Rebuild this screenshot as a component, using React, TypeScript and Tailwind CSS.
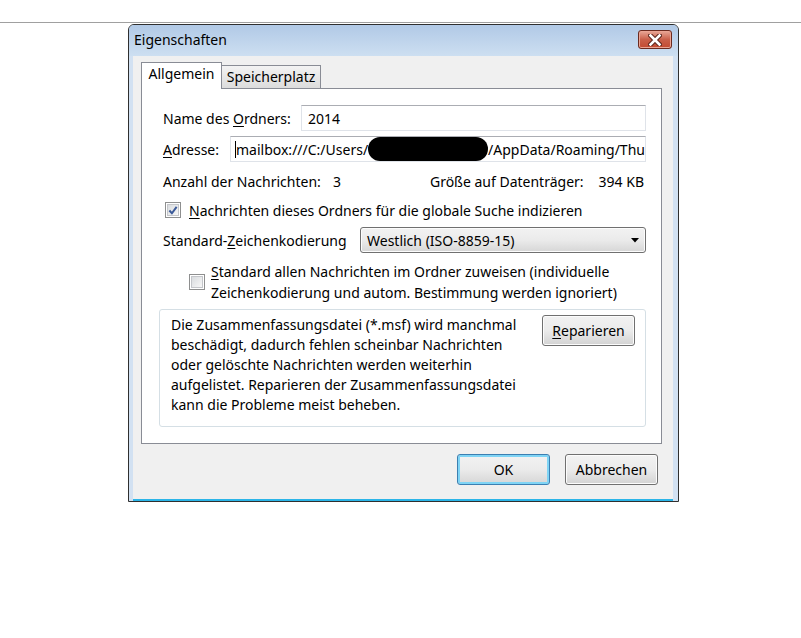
import React from "react";

function Checkbox({ checked = false }: { checked?: boolean }) {
  return (
    <span className="flex h-[16px] w-[16px] shrink-0 items-center justify-center border border-[#8e8f8f] bg-white">
      <span className="flex h-[12px] w-[12px] items-center justify-center border border-[#c4c6ca] bg-linear-to-br from-[#d9dcdf] to-[#f7f7f7]">
        {checked ? (
          <svg width="11" height="11" viewBox="0 0 11 11">
            <path d="M1.5 5.5 L4.3 8.5 L9.5 1.5" fill="none" stroke="#3b5a99" strokeWidth="2.2" />
          </svg>
        ) : null}
      </span>
    </span>
  );
}

function WinButton({ children, isDefault = false }: { children: React.ReactNode; isDefault?: boolean }) {
  return (
    <button
      className={
        isDefault
          ? "flex h-[31px] w-[93px] items-center justify-center rounded-[3px] border border-[#3c7fb1] bg-linear-to-b from-[#f2f2f2] via-[#ebebeb] to-[#d6d6d6] shadow-[inset_0_0_0_2px_#7fd4f5]"
          : "flex h-[31px] w-[93px] items-center justify-center rounded-[3px] border border-[#707070] bg-linear-to-b from-[#f2f2f2] via-[#ebebeb] to-[#d3d3d3] shadow-[inset_0_0_0_1px_#fcfcfc]"
      }
    >
      {children}
    </button>
  );
}

export default function App() {
  return (
    <div className="h-[638px] w-[801px] bg-white font-['Noto_Sans',sans-serif] text-[14px] text-black">
      <div className="h-[23px] border-b border-[#a0a0a0]" />

      {/* dialog window */}
      <div className="mt-[1px] ml-[128px] w-[551px] rounded-t-[6px] border border-[#2f2f2f] bg-[#d2e1f2]">
        <div className="flex h-[31px] items-start justify-between rounded-t-[5px] bg-linear-to-b from-[#b1c9e6] to-[#cddff1] pl-[5px] pr-[6px]">
          <span className="mt-[5px] leading-[20px]">Eigenschaften</span>
          <span className="mt-[5px] flex h-[19px] w-[34px] items-center justify-center rounded-[3px] border border-[#6b2a1f] bg-linear-to-b from-[#e8a898] via-[#c9604a] to-[#c34a31] shadow-[inset_0_0_0_1px_#eaa493]">
            <svg width="14" height="12" viewBox="0 0 14 12">
              <path d="M2.5 1.5 L11.5 10.5 M11.5 1.5 L2.5 10.5" stroke="#5b241b" strokeWidth="4.6" strokeLinecap="square" />
              <path d="M2.5 1.5 L11.5 10.5 M11.5 1.5 L2.5 10.5" stroke="#ffffff" strokeWidth="2.6" strokeLinecap="square" />
            </svg>
          </span>
        </div>

        <div className="ml-[4px] mr-[5px] h-[443px] bg-[#f0f0f0] pt-[6px] pl-[8px]">
          {/* tabs */}
          <div className="relative z-10 flex h-[26px] items-end">
            <div className="-mb-[1px] flex h-[27px] w-[81px] items-start justify-center border border-b-0 border-[#898c95] bg-white pt-[1px] leading-[20px]">
              Allgemein
            </div>
            <div className="flex h-[23px] w-[99px] items-center justify-center border border-l-0 border-b-0 border-[#898c95] bg-linear-to-b from-[#f3f3f3] to-[#dcdcdc] leading-[20px]">
              Speicherplatz
            </div>
          </div>

          <div className="h-[356px] w-[521px] border border-[#898c95] bg-white pt-[16px] pl-[21px]">
            <div className="flex h-[26px] items-center">
              <span>
                Name des <u className="underline-offset-2">O</u>rdners:
              </span>
              <div className="ml-auto mr-[15px] flex h-[26px] w-[345px] items-center border border-[#dfe3e9] border-t-[#abadb3] pl-[6px]">
                2014
              </div>
            </div>

            <div className="mt-[5px] flex h-[26px] items-center">
              <span>
                <u className="underline-offset-2">A</u>dresse:
              </span>
              <div className="ml-auto mr-[15px] flex h-[26px] w-[416px] items-center overflow-hidden whitespace-nowrap border border-[#dfe3e9] border-t-[#abadb3] pl-[4px]">
                <span className="h-[17px] w-[1px] shrink-0 bg-black" />
                <span>mailbox:///C:/Users/</span>
                <span className="h-[24px] w-[120px] shrink-0 rounded-[12px] bg-black" />
                <span>/AppData/Roaming/Thu</span>
              </div>
            </div>

            <div className="mt-[9px] flex h-[20px] items-center pr-[17px]">
              <span className="w-[170px]">Anzahl der Nachrichten:</span>
              <span>3</span>
              <span className="ml-auto">Größe auf Datenträger:</span>
              <span className="ml-[15px]">394 KB</span>
            </div>

            <div className="mt-[9px] flex h-[20px] items-center pl-[2px]">
              <Checkbox checked />
              <span className="ml-[8px]">
                <u className="underline-offset-2">N</u>achrichten dieses Ordners für die globale Suche indizieren
              </span>
            </div>

            <div className="mt-[7px] flex h-[26px] items-center">
              <span>
                Standard-<u className="underline-offset-2">Z</u>eichenkodierung
              </span>
              <div className="ml-auto mr-[15px] flex h-[26px] w-[286px] items-center justify-between rounded-[3px] border border-[#707070] bg-linear-to-b from-[#f2f2f2] via-[#ebebeb] to-[#d6d6d6] pl-[6px] pr-[6px] shadow-[inset_0_0_0_1px_#fcfcfc]">
                <span>Westlich (ISO-8859-15)</span>
                <svg width="8" height="5" viewBox="0 0 8 5">
                  <path d="M0 0 L8 0 L4 4.5 Z" fill="#000" />
                </svg>
              </div>
            </div>

            <div className="mt-[8px] flex items-center pl-[26px]">
              <Checkbox />
              <span className="ml-[6px] leading-[21px]">
                <u className="underline-offset-2">S</u>tandard allen Nachrichten im Ordner zuweisen (individuelle
                <br />
                Zeichenkodierung und autom. Bestimmung werden ignoriert)
              </span>
            </div>

            <div className="mt-[6px] -ml-[4px] flex h-[118px] w-[487px] rounded-[3px] border border-[#d5dfe5] pt-[5px] pl-[11px] pr-[10px]">
              <p className="leading-[20px]">
                Die Zusammenfassungsdatei (*.msf) wird manchmal
                <br />
                beschädigt, dadurch fehlen scheinbar Nachrichten
                <br />
                oder gelöschte Nachrichten werden weiterhin
                <br />
                aufgelistet. Reparieren der Zusammenfassungsdatei
                <br />
                kann die Probleme meist beheben.
              </p>
              <div className="ml-auto">
                <WinButton>
                  <span>
                    <u className="underline-offset-2">R</u>eparieren
                  </span>
                </WinButton>
              </div>
            </div>
          </div>

          <div className="flex justify-end gap-[15px] pt-[10px] pr-[15px]">
            <WinButton isDefault>OK</WinButton>
            <WinButton>Abbrechen</WinButton>
          </div>
        </div>
        <div className="ml-[4px] mr-[5px] h-[2px] bg-[#2bb5e8]" />
      </div>
    </div>
  );
}
